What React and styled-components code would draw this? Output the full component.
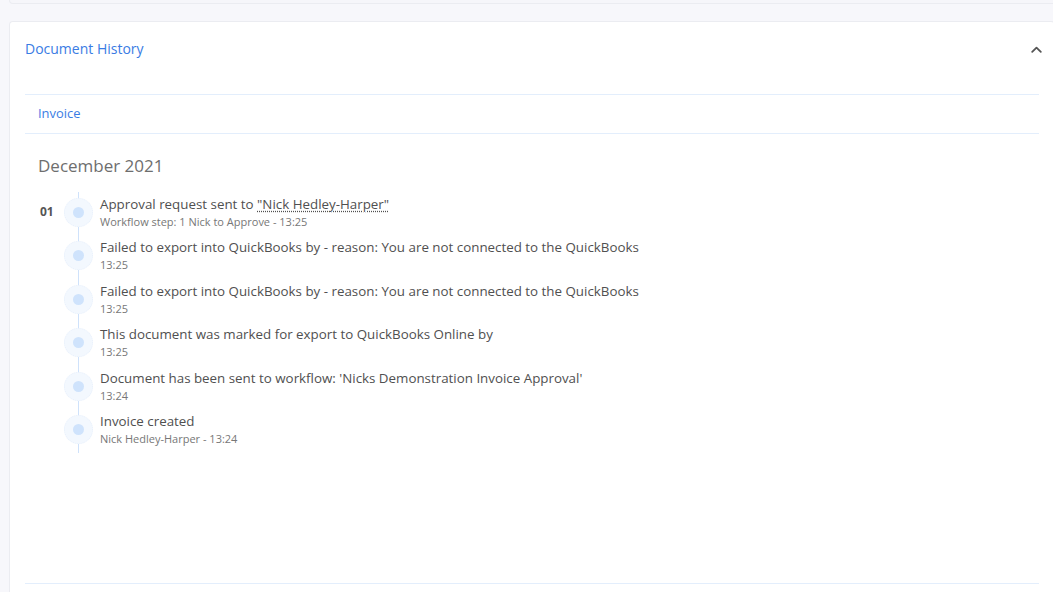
import styled, { createGlobalStyle } from "styled-components";

const GlobalStyle = createGlobalStyle`
  html, body {
    margin: 0;
    padding: 0;
    background: #f7f7fb;
    font-family: "Open Sans", "Liberation Sans", sans-serif;
    overflow: hidden;
  }
`;

const Page = styled.div`
  width: 1053px;
  height: 592px;
  padding-left: 9px;
  box-sizing: border-box;
  background: #f7f7fb;
  overflow: hidden;
`;

const TopCard = styled.div`
  height: 3px;
  margin-right: -4px;
  background: #f6f6fa;
  border: 1px solid #ebecf1;
  border-top: none;
  border-radius: 0 0 4px 4px;
`;

const Card = styled.section`
  margin-top: 17px;
  margin-right: -2px;
  height: 571px;
  box-sizing: border-box;
  padding: 0 15px;
  background: #fff;
  border: 1px solid #ebecf1;
  border-bottom: none;
  border-radius: 4px 4px 0 0;
`;

const Header = styled.div`
  height: 73px;
  box-sizing: border-box;
  padding-top: 17px;
  display: flex;
  justify-content: space-between;
  align-items: flex-start;
  border-bottom: 1px solid #e3eefc;
`;

const Title = styled.h2`
  margin: 0;
  font-size: 14px;
  line-height: 20px;
  font-weight: 400;
  color: #3a7ce4;
`;

const Toggle = styled.button`
  border: none;
  background: transparent;
  padding: 0;
  width: 14px;
  height: 20px;
  margin-right: -4px;
  display: flex;
  align-items: center;
  justify-content: center;
  color: #555;
  cursor: pointer;
`;

const Tabs = styled.div`
  height: 39px;
  box-sizing: border-box;
  padding: 0 0 2px 13px;
  display: flex;
  align-items: center;
  border-bottom: 1px solid #e3eefc;
`;

const Tab = styled.a`
  font-size: 12.9px;
  color: #3a7ce4;
  text-decoration: none;
`;

const Body = styled.div`
  height: 450px;
  box-sizing: border-box;
  padding: 22px 0 0 13px;
  border-bottom: 1px solid #e3eefc;
`;

const MonthHeading = styled.h3`
  margin: 0 0 16px;
  font-size: 17px;
  line-height: 20px;
  font-weight: 400;
  color: #6e6e6e;
`;

const DayGroup = styled.div`
  display: flex;
  align-items: flex-start;
`;

const DayLabel = styled.div`
  width: 26px;
  padding-left: 2px;
  box-sizing: border-box;
  margin-top: 2px;
  line-height: 36px;
  font-size: 12px;
  font-weight: 700;
  color: #555;
`;

const Timeline = styled.ul`
  position: relative;
  list-style: none;
  margin: 0;
  padding: 2px 0 5px;

  &::before {
    content: "";
    position: absolute;
    left: 14px;
    top: 0;
    bottom: 0;
    width: 1px;
    background: #cfe2fb;
  }
`;

const Item = styled.li`
  display: flex;
  align-items: center;
  min-height: 36px;
  margin-bottom: 7.5px;

  &:last-child {
    margin-bottom: 0;
  }
`;

const Marker = styled.span`
  position: relative;
  flex: none;
  width: 29px;
  height: 29px;
  box-sizing: border-box;
  border-radius: 50%;
  background: #f3f8fe;
  border: 1px dotted #e8f0fc;
  display: flex;
  align-items: center;
  justify-content: center;

  &::after {
    content: "";
    width: 11px;
    height: 11px;
    border-radius: 50%;
    background: #cfe3fc;
  }
`;

const Text = styled.div`
  margin-left: 7px;
`;

const ItemTitle = styled.div`
  font-size: 13.35px;
  line-height: 18px;
  color: #505050;
`;

const ItemMeta = styled.div`
  font-size: 11px;
  line-height: 17px;
  color: #777;
`;

const Person = styled.span`
  text-decoration: underline dotted;
  text-underline-offset: 2px;
`;

const ChevronUp = () => (
  <svg width="11" height="7" viewBox="0 0 11 7" fill="none">
    <polyline
      points="1.2,5.8 5.5,1.6 9.8,5.8"
      stroke="currentColor"
      strokeWidth="1.8"
      strokeLinecap="round"
      strokeLinejoin="round"
    />
  </svg>
);

const events = [
  {
    title: (
      <>
        Approval request sent to <Person>"Nick Hedley-Harper"</Person>
      </>
    ),
    meta: "Workflow step: 1 Nick to Approve - 13:25",
  },
  {
    title:
      "Failed to export into QuickBooks by - reason: You are not connected to the QuickBooks",
    meta: "13:25",
  },
  {
    title:
      "Failed to export into QuickBooks by - reason: You are not connected to the QuickBooks",
    meta: "13:25",
  },
  {
    title: "This document was marked for export to QuickBooks Online by",
    meta: "13:25",
  },
  {
    title:
      "Document has been sent to workflow: 'Nicks Demonstration Invoice Approval'",
    meta: "13:24",
  },
  { title: "Invoice created", meta: "Nick Hedley-Harper - 13:24" },
];

const App = () => {
  return (
    <>
      <GlobalStyle />
      <Page>
        <TopCard />
        <Card>
          <Header>
            <Title>Document History</Title>
            <Toggle aria-label="Collapse">
              <ChevronUp />
            </Toggle>
          </Header>
          <Tabs>
            <Tab href="#">Invoice</Tab>
          </Tabs>
          <Body>
            <MonthHeading>December 2021</MonthHeading>
            <DayGroup>
              <DayLabel>01</DayLabel>
              <Timeline>
                {events.map((e, i) => (
                  <Item key={i}>
                    <Marker />
                    <Text>
                      <ItemTitle>{e.title}</ItemTitle>
                      <ItemMeta>{e.meta}</ItemMeta>
                    </Text>
                  </Item>
                ))}
              </Timeline>
            </DayGroup>
          </Body>
        </Card>
      </Page>
    </>
  );
};

export default App;
